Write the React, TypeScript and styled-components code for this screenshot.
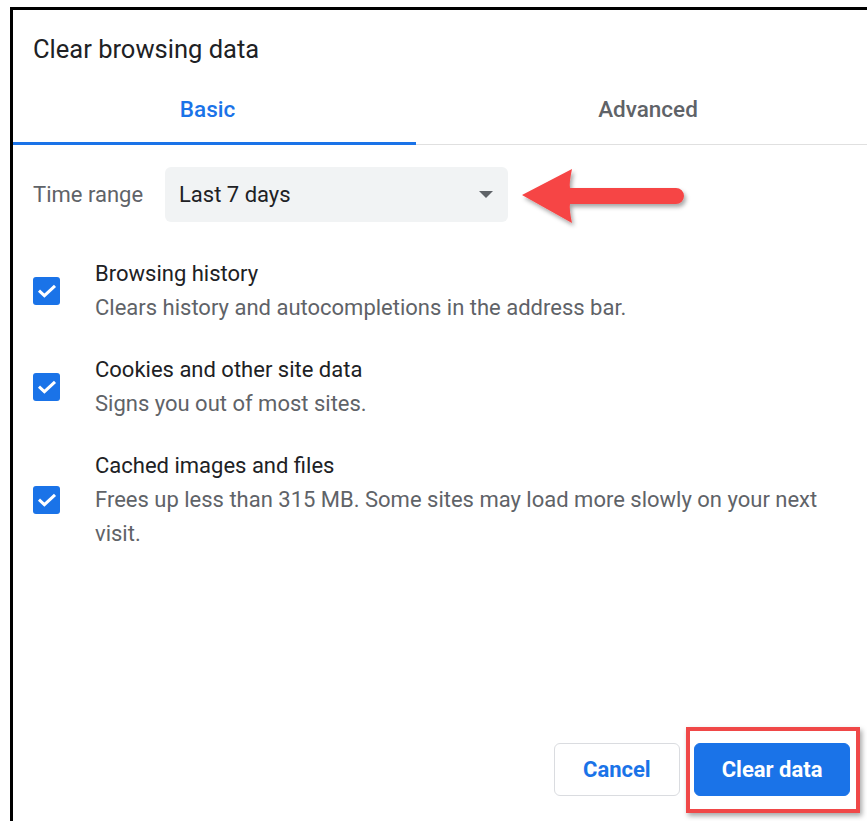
import React from 'react'
import styled, { createGlobalStyle } from 'styled-components'

const GlobalStyle = createGlobalStyle`
  html, body {
    margin: 0;
    padding: 0;
    background: #fff;
    overflow: hidden;
  }
  body {
    font-family: Roboto, "Liberation Sans", Arial, sans-serif;
  }
`

const items = [
  { title: 'Browsing history', desc: 'Clears history and autocompletions in the address bar.' },
  { title: 'Cookies and other site data', desc: 'Signs you out of most sites.' },
  {
    title: 'Cached images and files',
    desc: 'Frees up less than 315 MB. Some sites may load more slowly on your next visit.',
  },
]

const App = () => {
  return (
    <>
      <GlobalStyle />
      <Frame>
        <Dialog>
          <Title>Clear browsing data</Title>
          <Tabs>
            <Tab active width={403}>Basic</Tab>
            <Tab>Advanced</Tab>
          </Tabs>
          <Body>
            <RangeRow>
              <RangeLabel>Time range</RangeLabel>
              <Select>
                <span>Last 7 days</span>
                <Caret />
              </Select>
              <Arrow width="172" height="64" viewBox="0 0 172 64">
                <defs>
                  <filter id="arrowShadow" x="-10%" y="-20%" width="130%" height="150%">
                    <feDropShadow dx="2" dy="3" stdDeviation="2.2" floodColor="#000" floodOpacity="0.35" />
                  </filter>
                </defs>
                <path
                  d="M2 29 L52 3 Q49 17 50 22 L156 22 A8 8 0 0 1 156 38 L50 38 Q49 43 52 57 Z"
                  fill="#f64545"
                  filter="url(#arrowShadow)"
                />
              </Arrow>
            </RangeRow>

            <List>
              {items.map((it) => (
                <Item key={it.title}>
                  <Check>
                    <svg width="20" height="14" viewBox="0 0 20 14">
                      <path d="M2 6.6 L7.4 11.6 L18 1.8" fill="none" stroke="#fff" strokeWidth="3" />
                    </svg>
                  </Check>
                  <ItemText>
                    <ItemTitle>{it.title}</ItemTitle>
                    <ItemDesc>{it.desc}</ItemDesc>
                  </ItemText>
                </Item>
              ))}
            </List>
          </Body>
          <Footer>
            <Button>Cancel</Button>
            <Highlight>
              <Button primary>Clear data</Button>
            </Highlight>
          </Footer>
        </Dialog>
      </Frame>
    </>
  )
}

const Frame = styled.div`
  margin: 7px 0 0 10px;
  height: calc(100vh - 7px);
  box-sizing: border-box;
  border-top: 3px solid #000;
  border-left: 3px solid #000;
  overflow: hidden;
`

const Dialog = styled.div`
  width: 867px;
  height: 100%;
  display: flex;
  flex-direction: column;
  background: #fff;
`

const Title = styled.div`
  padding: 24px 0 0 20px;
  height: 41px;
  font-size: 25.5px;
  line-height: 30px;
  color: #202124;
`

const Tabs = styled.div`
  display: flex;
  border-bottom: 1px solid #e0e0e0;
`

const Tab = styled.div<{ active?: boolean; width?: number }>`
  flex: ${(p) => (p.width ? `0 0 ${p.width}px` : '1')};
  height: 70px;
  box-sizing: border-box;
  padding-top: 20px;
  padding-right: ${(p) => (p.active ? '14px' : '0')};
  line-height: 28px;
  text-align: center;
  font-size: 22.5px;
  font-weight: 500;
  color: ${(p) => (p.active ? '#1a73e8' : '#5f6368')};
  box-shadow: ${(p) => (p.active ? 'inset 0 -3px 0 #1a73e8' : 'none')};
  margin-bottom: -1px;
`

const Body = styled.div`
  padding: 14px 0 0 20px;
`

const RangeRow = styled.div`
  display: flex;
  align-items: center;
`

const RangeLabel = styled.div`
  width: 132px;
  font-size: 22px;
  color: #5f6368;
`

const Select = styled.div`
  width: 343px;
  height: 55px;
  box-sizing: border-box;
  padding: 0 14px;
  display: flex;
  align-items: center;
  justify-content: space-between;
  background: #f1f3f4;
  border-radius: 6px;
  font-size: 22px;
  color: #202124;
`

const Caret = styled.span`
  width: 0;
  height: 0;
  border-left: 7px solid transparent;
  border-right: 7px solid transparent;
  border-top: 7px solid #5f6368;
  margin-right: 1px;
`

const Arrow = styled.svg`
  margin-left: 12px;
  margin-top: 7px;
`

const List = styled.div`
  margin-top: 27px;
  display: flex;
  flex-direction: column;
  gap: 28px;
`

const Item = styled.div`
  display: flex;
  align-items: center;
`

const Check = styled.div`
  flex: none;
  width: 27px;
  height: 28px;
  border-radius: 3px;
  background: #1a73e8;
  display: flex;
  align-items: center;
  justify-content: center;
  margin-right: 35px;
`

const ItemText = styled.div`
  display: flex;
  flex-direction: column;
  max-width: 750px;
`

const ItemTitle = styled.div`
  font-size: 22px;
  line-height: 34px;
  color: #202124;
`

const ItemDesc = styled.div`
  font-size: 22px;
  line-height: 34px;
  color: #5f6368;
`

const Footer = styled.div`
  margin-top: auto;
  margin-bottom: 25px;
  display: flex;
  align-items: center;
  padding-left: 541px;
  gap: 14px;
`

const Button = styled.button<{ primary?: boolean }>`
  height: 53px;
  padding: 0 ${(p) => (p.primary ? '27px' : '28px')};
  border-radius: 6px;
  border: 1px solid ${(p) => (p.primary ? '#1a73e8' : '#dadce0')};
  background: ${(p) => (p.primary ? '#1a73e8' : '#fff')};
  color: ${(p) => (p.primary ? '#fff' : '#1a73e8')};
  font-family: Roboto, "Liberation Sans", Arial, sans-serif;
  font-size: 22px;
  font-weight: 700;
`

const Highlight = styled.span`
  position: relative;
  display: inline-flex;

  &::after {
    content: '';
    position: absolute;
    left: -8px;
    right: -10px;
    top: -16px;
    bottom: -17px;
    border: 4px solid #f04848;
    box-shadow: 2px 3px 5px rgba(0, 0, 0, 0.35);
    pointer-events: none;
  }
`

export default App
